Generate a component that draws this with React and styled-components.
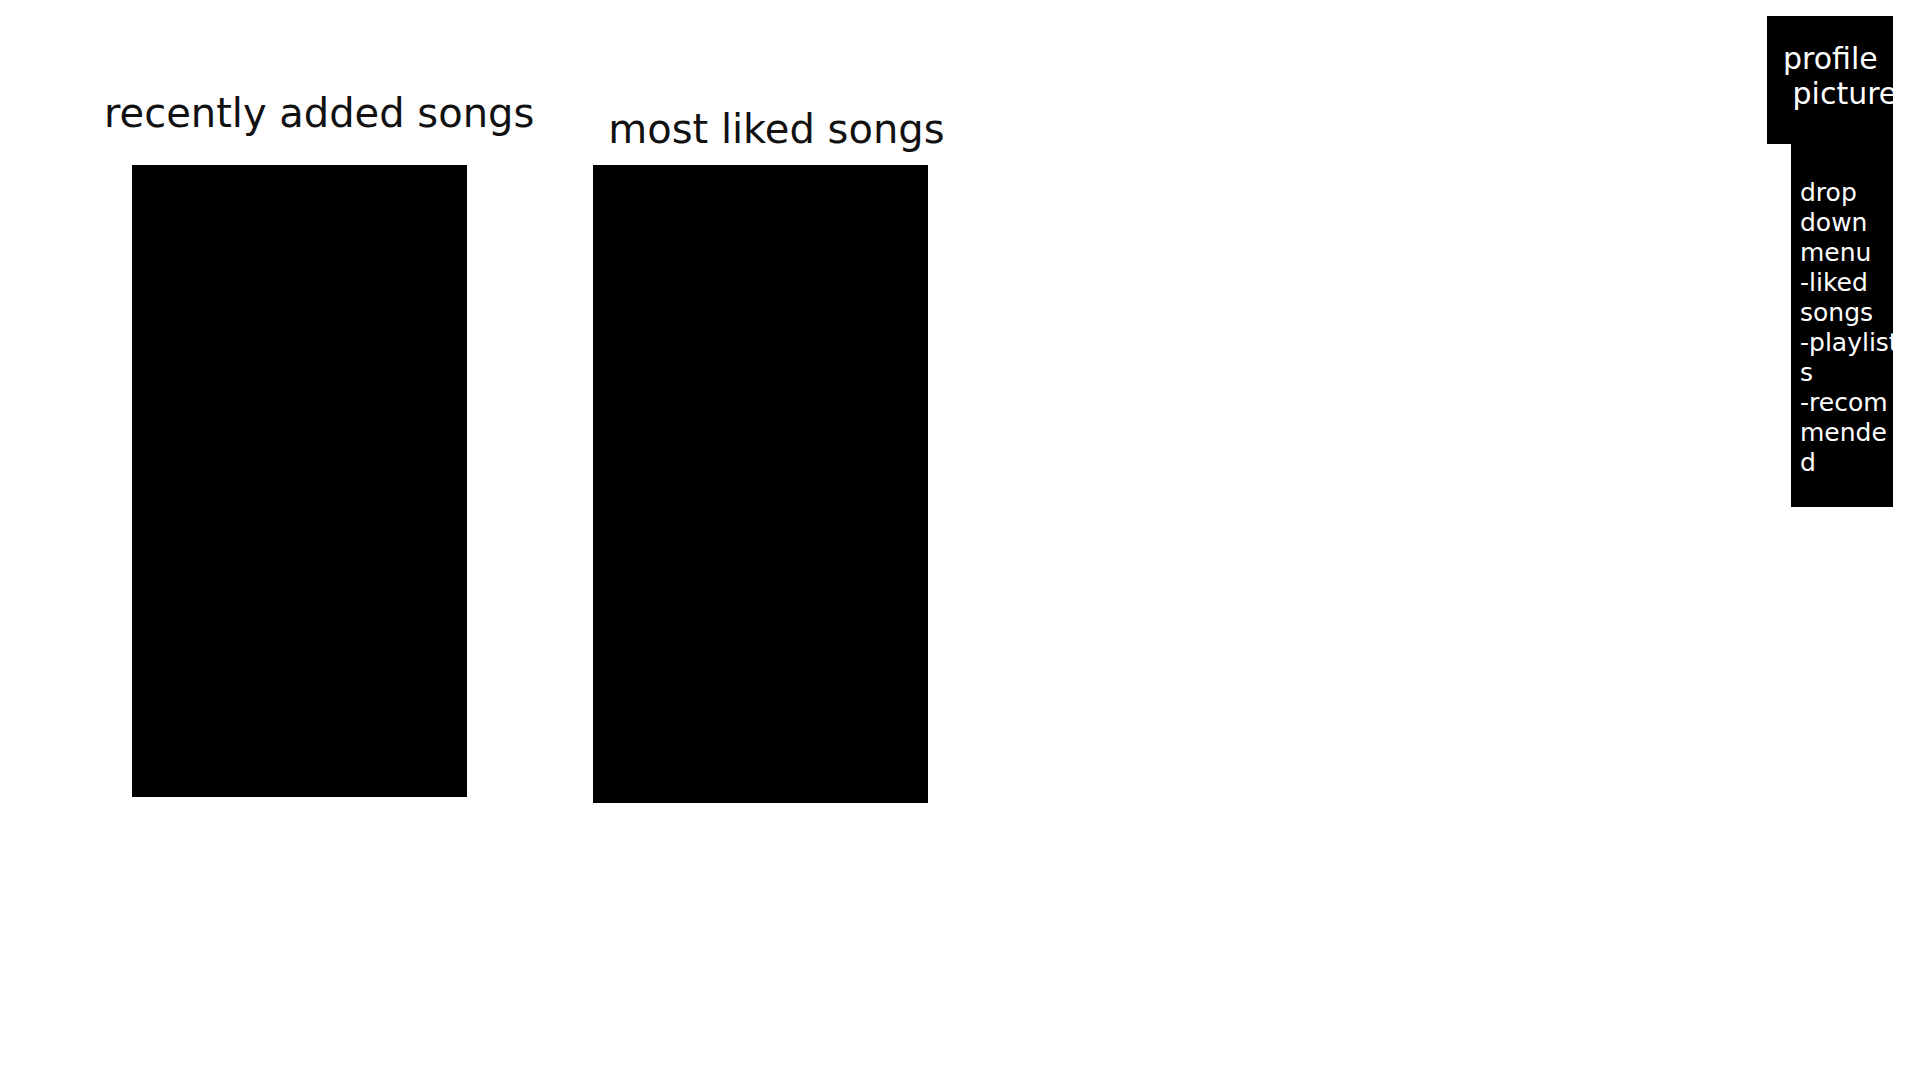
import React from "react";
import styled, { createGlobalStyle } from "styled-components";

const GlobalStyle = createGlobalStyle`
  html, body {
    margin: 0;
    padding: 0;
    background: #ffffff;
    font-family: "DejaVu Sans", "Liberation Sans", sans-serif;
  }
`;

const Page = styled.div`
  width: 1920px;
  height: 1080px;
  display: flex;
  align-items: flex-start;
  overflow: hidden;
  background: #ffffff;
`;

const Shelves = styled.main`
  display: flex;
  align-items: flex-start;
  padding-left: 104px;
  gap: 59px;
`;

const Shelf = styled.section`
  display: flex;
  flex-direction: column;
  padding-top: ${(p) => p.$top}px;
`;

const ShelfTitle = styled.h2`
  margin: 0 0 ${(p) => p.$gap}px ${(p) => p.$indent}px;
  font-family: "DejaVu Sans", sans-serif;
  font-weight: normal;
  font-size: 40px;
  line-height: normal;
  color: #111111;
  white-space: nowrap;
`;

const SongPanel = styled.div`
  width: 335px;
  height: ${(p) => p.$height}px;
  margin-left: ${(p) => p.$indent}px;
  background: #000000;
`;

const Account = styled.aside`
  margin-left: auto;
  margin-right: 27px;
  padding-top: 16px;
  display: flex;
  flex-direction: column;
  align-items: flex-end;
`;

const ProfilePicture = styled.div`
  width: 126px;
  height: 128px;
  box-sizing: border-box;
  padding: 25px 0 0 16px;
  background: #000000;
  color: #ffffff;
  font-size: 30px;
  line-height: 35px;
  white-space: pre;
  overflow: hidden;
`;

const Dropdown = styled.nav`
  width: 102px;
  height: 363px;
  box-sizing: border-box;
  padding-top: 34px;
  background: #000000;
  overflow: hidden;
`;

const DropdownList = styled.ul`
  width: 100px;
  margin: 0 0 0 9px;
  padding: 0;
  list-style: none;
  color: #ffffff;
  font-size: 25px;
  line-height: 30px;
  overflow-wrap: break-word;
`;

const DropdownItem = styled.li`
  margin: 0;
  padding: 0;
`;

const J = "\u2060";

export default function App() {
  return (
    <>
      <GlobalStyle />
      <Page>
        <Shelves>
          <Shelf $top={90}>
            <ShelfTitle $gap={29} $indent={0}>recently added songs</ShelfTitle>
            <SongPanel $height={632} $indent={28} />
          </Shelf>
          <Shelf $top={106}>
            <ShelfTitle $gap={13} $indent={15}>most liked songs</ShelfTitle>
            <SongPanel $height={638} $indent={0} />
          </Shelf>
        </Shelves>
        <Account>
          <ProfilePicture>{"profile\n picture"}</ProfilePicture>
          <Dropdown>
            <DropdownList>
              <DropdownItem>drop down menu</DropdownItem>
              <DropdownItem>{`-${J}liked songs`}</DropdownItem>
              <DropdownItem>{`-${J}playlists`}</DropdownItem>
              <DropdownItem>{`-${J}recommended`}</DropdownItem>
            </DropdownList>
          </Dropdown>
        </Account>
      </Page>
    </>
  );
}
